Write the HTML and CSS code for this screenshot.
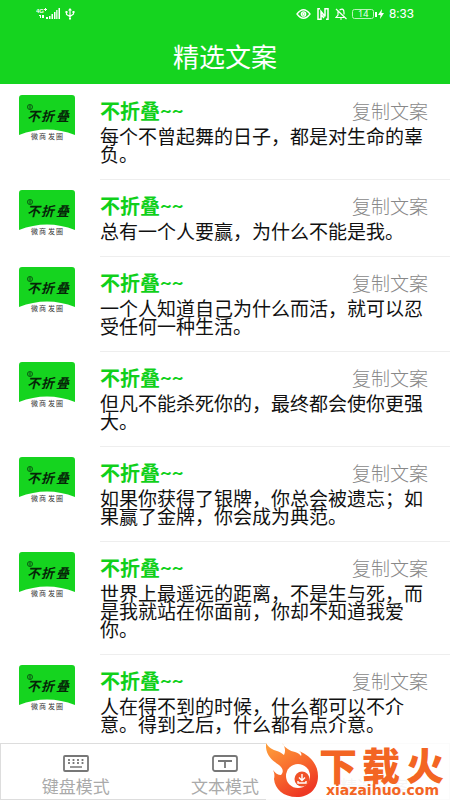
FILE: index.html
```html
<!DOCTYPE html>
<html lang="zh-CN">
<head>
<meta charset="utf-8">
<meta name="viewport" content="width=device-width, initial-scale=1">
<title>精选文案</title>
<link rel="stylesheet" href="styles.css">
</head>
<body>
<svg class="defs" aria-hidden="true">
  <symbol id="brand" viewBox="0 0 56 48">
    <path d="M0 40V3Q0 0 3 0H53Q56 0 56 3V40Q28 29 0 40Z" fill="#15d41f"/>
    <circle cx="11" cy="12" r="2.6" fill="none" stroke="#0a4a10" stroke-width=".8"/>
    <path d="M9.500 11H12.500M9.500 13H12.500M11 10V14" stroke="#0a4a10" stroke-width=".6"/>
  </symbol>
</svg>
<div class="app">
  <header class="header">
    <div class="status">
      <div class="status-group">
        <svg width="24" height="12" viewBox="0 0 24 12" fill="#fff" aria-hidden="true">
          <text x="0" y="5" class="net">4G</text><path d="M9 0h1v1h1v1h-1v1h-1v-1h-1v-1h1z"/>
          <path d="M3 7h2v3h-1v-2h-1zM6 7h2v3h-2zM10 9h2v2h-2zM13 8h1.500v3h-1.500zM15.500 6h1.500v5h-1.500zM18 4h1.500v7h-1.500zM20.200 2h1.300v9h-1.300zM22.500 0h1.500v11h-1.500z"/>
        </svg>
        <svg width="10" height="12" viewBox="0 0 10 12" fill="none" stroke="#fff" stroke-width="1.200" aria-hidden="true">
          <path d="M5 1V11M1.500 4V6.500L5 8.500L8.500 6V4"/><path d="M3 2.500L5 0L7 2.500ZM.5 3h2v2h-2zM7.500 3h2v2h-2zM4 10h2v1.500h-2z" fill="#fff" stroke="none"/>
        </svg>
      </div>
      <div class="status-group">
        <svg width="15" height="12" viewBox="0 0 15 12" fill="none" stroke="#fff" stroke-width="1.300" aria-hidden="true">
          <path d="M1 6Q7.500-2.500 14 6Q7.500 14.500 1 6Z"/><circle cx="7.500" cy="6" r="2.200"/><circle cx="7.500" cy="6" r=".6" fill="#fff"/>
        </svg>
        <svg width="14" height="12" viewBox="0 0 14 12" aria-hidden="true">
          <path d="M4 .8H2V11.200H5V3.500L9 8.500M10 11.200H12V.8H9V8.500M5 3.500V6.500L8 10" fill="none" stroke="#fff" stroke-width="1.500"/>
        </svg>
        <svg width="12" height="12" viewBox="0 0 12 12" fill="none" stroke="#fff" stroke-width="1.200" aria-hidden="true">
          <path d="M1 1L11.500 11M3 3.500V7L1 9.500H9M4.500 2Q9-.5 9 4.500V6.500M5 11H7"/>
        </svg>
        <svg class="battery" width="25" height="12" viewBox="0 0 25 12" aria-hidden="true">
          <rect x=".5" y="1.500" width="21" height="9" rx="2" fill="none" stroke="#b9f5bb"/><path d="M23 4h2v5h-2z" fill="#fff"/><text x="6" y="9" fill="#fff">14</text>
        </svg>
        <svg width="6" height="12" viewBox="0 0 6 12" fill="#fff" aria-hidden="true"><path d="M4 1L0 7H2.500L2 11L6 5H3.500Z"/></svg>
        <span class="clock">8:33</span>
      </div>
    </div>
    <h1 class="title">精选文案</h1>
  </header>

  <main class="list">
    <article class="row">
      <svg class="avatar" viewBox="0 0 56 48" aria-hidden="true"><use href="#brand"/><text class="brush" x="8 22 37" y="26">不折叠</text><text class="tagline" x="12 20 29 37" y="44">微商发圈</text></svg>
      <div class="body"><div class="top"><h2>不折叠~~</h2><button type="button">复制文案</button></div>
      <p>每个不曾起舞的日子，都是对生命的辜负。</p></div>
    </article>
    <article class="row">
      <svg class="avatar" viewBox="0 0 56 48" aria-hidden="true"><use href="#brand"/><text class="brush" x="8 22 37" y="26">不折叠</text><text class="tagline" x="12 20 29 37" y="44">微商发圈</text></svg>
      <div class="body"><div class="top"><h2>不折叠~~</h2><button type="button">复制文案</button></div>
      <p>总有一个人要赢，为什么不能是我。</p></div>
    </article>
    <article class="row">
      <svg class="avatar" viewBox="0 0 56 48" aria-hidden="true"><use href="#brand"/><text class="brush" x="8 22 37" y="26">不折叠</text><text class="tagline" x="12 20 29 37" y="44">微商发圈</text></svg>
      <div class="body"><div class="top"><h2>不折叠~~</h2><button type="button">复制文案</button></div>
      <p>一个人知道自己为什么而活，就可以忍受任何一种生活。</p></div>
    </article>
    <article class="row">
      <svg class="avatar" viewBox="0 0 56 48" aria-hidden="true"><use href="#brand"/><text class="brush" x="8 22 37" y="26">不折叠</text><text class="tagline" x="12 20 29 37" y="44">微商发圈</text></svg>
      <div class="body"><div class="top"><h2>不折叠~~</h2><button type="button">复制文案</button></div>
      <p>但凡不能杀死你的，最终都会使你更强大。</p></div>
    </article>
    <article class="row">
      <svg class="avatar" viewBox="0 0 56 48" aria-hidden="true"><use href="#brand"/><text class="brush" x="8 22 37" y="26">不折叠</text><text class="tagline" x="12 20 29 37" y="44">微商发圈</text></svg>
      <div class="body"><div class="top"><h2>不折叠~~</h2><button type="button">复制文案</button></div>
      <p>如果你获得了银牌，你总会被遗忘；如果赢了金牌，你会成为典范。</p></div>
    </article>
    <article class="row">
      <svg class="avatar" viewBox="0 0 56 48" aria-hidden="true"><use href="#brand"/><text class="brush" x="8 22 37" y="26">不折叠</text><text class="tagline" x="12 20 29 37" y="44">微商发圈</text></svg>
      <div class="body"><div class="top"><h2>不折叠~~</h2><button type="button">复制文案</button></div>
      <p>世界上最遥远的距离，不是生与死，而是我就站在你面前，你却不知道我爱你。</p></div>
    </article>
    <article class="row">
      <svg class="avatar" viewBox="0 0 56 48" aria-hidden="true"><use href="#brand"/><text class="brush" x="8 22 37" y="26">不折叠</text><text class="tagline" x="12 20 29 37" y="44">微商发圈</text></svg>
      <div class="body"><div class="top"><h2>不折叠~~</h2><button type="button">复制文案</button></div>
      <p>人在得不到的时候，什么都可以不介意。得到之后，什么都有点介意。</p></div>
    </article>
  </main>

  <nav class="tabs">
    <button type="button">
      <svg width="26" height="17" viewBox="0 0 26 17" fill="none" stroke="#777" aria-hidden="true">
        <rect x="1" y="1" width="24" height="15" rx="1" stroke-width="1.800"/>
        <path d="M6 4v2M10.500 4v2M15 4v2M19.500 4v2M6 7v2M10.500 7v2M15 7v2M19.500 7v2" stroke-width="1.800"/><path d="M7 12H19" stroke-width="1.500"/>
      </svg>
      <span>键盘模式</span>
    </button>
    <button type="button">
      <svg width="26" height="17" viewBox="0 0 26 17" fill="none" stroke="#777" stroke-width="1.800" aria-hidden="true">
        <rect x="1" y="1" width="24" height="15" rx="2"/><path d="M6 6H20M13 6V13"/>
      </svg>
      <span>文本模式</span>
    </button>
    <button type="button">
      <svg width="26" height="17" viewBox="0 0 26 17" aria-hidden="true"></svg>
      <span>精选文案</span>
    </button>
  </nav>

  <div class="watermark">
    <svg width="184" height="58" viewBox="0 0 184 58" role="img" aria-label="下载火 xiazaihuo.com">
      <defs>
        <linearGradient id="fire" x1="0" y1="0" x2=".6" y2="1"><stop offset="0" stop-color="#ffa23c"/><stop offset=".5" stop-color="#f9702f"/><stop offset="1" stop-color="#ee3824"/></linearGradient>
      </defs>
      <path d="M0 1C3 6 7 8 11 9C15 10 16 12 18 13C20 9 19 4 16 1C19 6 24 9 29 10C33 11 34 13 35 14C36 12 35 10 33 9C45 14 52 23 52 34C52 47 43 55 31 55C17 55 9 47 8 37C9 33 8 30 7 28C9 31 12 33 15 33C18 30 17 26 13 23C5 18-1 12 0 1Z" fill="url(#fire)"/>
      <circle cx="32" cy="34" r="12" fill="#fff"/>
      <circle cx="36" cy="37" r="7.500" fill="#f05228"/>
      <path d="M36 32V38M33 35.500L36 38.500L39 35.500M32 39V41H40V39" fill="none" stroke="#fff" stroke-width="1.400"/>
      <text x="53 96 140" y="38" class="mark-name">下载火</text>
      <text x="60" y="53" class="mark-url">xiazaihuo.com</text>
    </svg>
  </div>
</div>
</body>
</html>
```
FILE: styles.css
```css
* { box-sizing: border-box; }

body {
  margin: 0;
  background: #fff;
  color: #111;
  font-family: "Noto Sans CJK SC", sans-serif;
}

button {
  padding: 0;
  border: 0;
  background: none;
  font-family: inherit;
}

.defs { position: absolute; width: 0; height: 0; }

.app {
  display: flex;
  flex-direction: column;
  height: 100vh;
  position: relative;
}

.header {
  flex: none;
  background: #15d41f;
  color: #fff;
}

.status {
  display: flex;
  justify-content: space-between;
  align-items: center;
  height: 28px;
  padding: 0 36px;
}

.status-group { display: flex; align-items: center; gap: 5px; }
.net { font: bold 6px "Liberation Sans", sans-serif; }
.battery text { font: 9px "Open Sans", sans-serif; }
.battery { margin-right: -4px; }
.clock { font: 13px/16px Roboto, sans-serif; }

.title {
  margin: 0;
  padding: 8px 0;
  font-size: 26px;
  line-height: 40px;
  font-weight: 400;
  text-align: center;
}

.list {
  flex: 1;
  min-height: 0;
  padding-top: 1px;
  overflow-y: auto;
  scrollbar-width: none;
}

.row { display: flex; gap: 25px; padding-left: 19px; }

.avatar { flex: none; width: 56px; height: 48px; margin-top: 10px; }
.brush { font-size: 13px; font-weight: 700; font-style: italic; fill: #062508; }
.tagline { font-size: 7px; fill: #333; }

.body {
  flex: 1;
  padding: 14px 22px 16px 0;
  border-bottom: 1px solid #eee;
}

.top {
  display: flex;
  justify-content: space-between;
  margin-bottom: 4px;
  line-height: 24px;
}

.top h2 { margin: 0; color: #10d01a; font-size: 20px; font-weight: 700; }
.top button { color: #888; font-size: 19px; line-height: 24px; font-weight: 300; }
.body p { margin: 0; font-size: 19px; line-height: 18px; }

.tabs {
  flex: none;
  display: flex;
  height: 57px;
  border: 1px solid #ddd;
  background: #fff;
}

.tabs button {
  flex: 1;
  display: flex;
  flex-direction: column;
  align-items: center;
  gap: 4px;
  padding-top: 11px;
  color: #aaa;
  font-size: 17px;
  line-height: 20px;
}

.watermark {
  position: absolute;
  right: 0;
  bottom: 0;
  height: 58px;
  background: rgba(255, 255, 255, .88);
}

.watermark svg { display: block; }
.mark-name { font-size: 38px; font-weight: 900; fill: #f36523; }
.mark-url { font: bold 14px "DejaVu Sans", sans-serif; fill: #f36523; }
```
